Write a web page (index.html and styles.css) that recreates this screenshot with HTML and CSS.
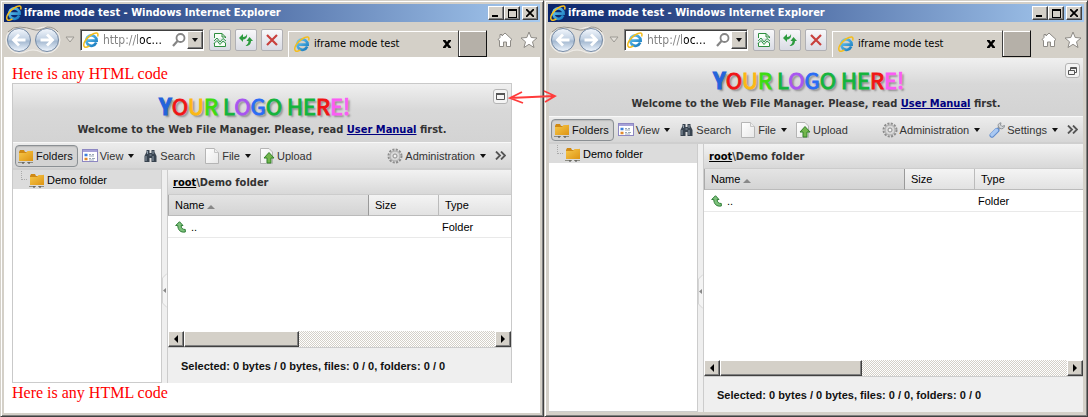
FILE: index.html
```
<!DOCTYPE html>
<html lang="en">
<head>
<meta charset="utf-8">
<title>iframe mode test</title>
<link rel="stylesheet" href="styles.css">
</head>
<body>
<svg class="defs" width="0" height="0" aria-hidden="true">
  <defs>
    <linearGradient id="g-orb" x1="0" y1="0" x2="0" y2="1"><stop offset="0" stop-color="#f4f8fd"/><stop offset=".45" stop-color="#c3d2e4"/><stop offset=".55" stop-color="#a3b8d0"/><stop offset="1" stop-color="#f2f8ff"/></linearGradient>
    <linearGradient id="g-folder" x1="0" y1="0" x2="1" y2="1"><stop offset="0" stop-color="#f7c84b"/><stop offset="1" stop-color="#dd9413"/></linearGradient>
    <linearGradient id="g-ie" x1="0" y1="0" x2="1" y2="1"><stop offset="0" stop-color="#6ccaf5"/><stop offset="1" stop-color="#1579bd"/></linearGradient>
    <linearGradient id="g-page" x1="0" y1="0" x2="1" y2="1"><stop offset="0" stop-color="#ffffff"/><stop offset="1" stop-color="#e8e8e8"/></linearGradient>
    <symbol id="ie" viewBox="0 0 16 16"><path d="M13.2 10.600A5.200 5.200 0 1 1 13.600 8.600H3.900" fill="none" stroke="url(#g-ie)" stroke-width="2.700"/><path d="M1.600 15C-1 12.500 3 6 8 3S16 .4 14.600 4.400M1.600 15C3 15.800 5 14.800 6.400 13.800" fill="none" stroke="#f4bd1d" stroke-width="1.500"/></symbol>
    <symbol id="orbs" viewBox="0 0 56 28"><path d="M14 1C22 1 23 3.500 28 3.500S34 1 42 1A13 13 0 0 1 42 27C35 27 34 24 28 24S21 27 14 27A13 13 0 0 1 14 1Z" fill="#dedbd6" stroke="#f3f1ed"/><path d="M3 6Q8 .5 15 1T28 3.500T42 1Q49 1 53 6" fill="none" stroke="#8f8c86"/><circle cx="14" cy="14" r="11.500" fill="url(#g-orb)" stroke="#7489a4"/><circle cx="42" cy="14" r="11.500" fill="url(#g-orb)" stroke="#7489a4"/><path d="M20.500 14H9M14 8.500L8.500 14L14 19.500M35.500 14H47M42 8.500L47.500 14L42 19.500" fill="none" stroke="#fff" stroke-width="2.800"/></symbol>
    <symbol id="hist" viewBox="0 0 10 7"><path d="M1 1H9L5 6Z" fill="#e3e0da" stroke="#9d9a94"/></symbol>
    <symbol id="lens" viewBox="0 0 14 14"><circle cx="8.500" cy="5" r="4" fill="none" stroke="#858585" stroke-width="1.800"/><path d="M5.500 8L1 13" stroke="#858585" stroke-width="2.200"/></symbol>
    <symbol id="compat" viewBox="0 0 14 14"><path d="M1.500 5V.500H9L12.500 4V5M1.500 10V13.500H12.500V10M9 .500V4H12.500" fill="#f7fff7" stroke="#2e8e3f"/><path d="M1 8L4 5L7 9L10 5.500L13 8M1 10.500L4 7.500L7 11.500L10 8L13 10.500" fill="none" stroke="#2e9a45"/></symbol>
    <symbol id="reload" viewBox="0 0 14 14"><path d="M0 5L4 1V4C6 4 7.500 3 8 1C8.500 4 7 6.500 4 6.500V9ZM14 8L10.500 4L7.500 8H9.500C9.500 10 8.500 11.500 6.500 13C10 13 12 11 12 8Z" fill="#2c9b3e"/></symbol>
    <symbol id="stop" viewBox="0 0 12 12"><path d="M1 1L11 11M11 1L1 11" stroke="#c9403d" stroke-width="2.200"/></symbol>
    <symbol id="close" viewBox="0 0 8 8"><path d="M0 0H2.500L4 2L5.500 0H8V1L5.500 4L8 7V8H5.500L4 6L2.500 8H0V7L2.500 4L0 1Z"/></symbol>
    <symbol id="home" viewBox="0 0 16 16"><path d="M8 1L15 7.500L13.500 8.500V14.500H9.500V10H6.500V14.500H2.500V8.500L1 7.500L3 5.500V2.500H5V4Z" fill="#fff" stroke="#8e8b86"/></symbol>
    <symbol id="star" viewBox="0 0 18 18"><path d="M9 1L11.200 6.500L17 7L12.500 10.800L14 16.500L9 13.300L4 16.500L5.500 10.800L1 7L6.800 6.500Z" fill="#fff" stroke="#8e8b86"/></symbol>
    <symbol id="folder" viewBox="0 0 16 16"><path d="M1 4L2 2H6L7 4H14L15 2.500V13H1Z" fill="#cf8915"/><path d="M1 5H8L9.500 3H15V13H1Z" fill="url(#g-folder)"/><path d="M0 14.500H7M9 14.500H15" stroke="#8d8d83"/><path d="M4 15H6M10 15H12" stroke="#444" stroke-width="1"/></symbol>
    <symbol id="view" viewBox="0 0 16 16"><rect x=".5" y="1.500" width="15" height="12" fill="#fff" stroke="#8d87c2"/><path d="M1 3H15" stroke="#a7a2d8" stroke-width="2"/><path d="M2.500 7H5.500" stroke="#3d7fda" stroke-width="2.500"/><path d="M2.500 11H5.500" stroke="#e08b2c" stroke-width="2.500"/><path d="M7 6.500H9M10 6.500H12M7 8H12M7 10.500H9M10 10.500H13M7 12H12" stroke="#9aa9b8"/></symbol>
    <symbol id="search" viewBox="0 0 14 14"><path d="M3 1H6V4H8V1H11V3L13 7V13H8V9H6V13H1V7L3 3Z" fill="#38434f"/><path d="M2.500 7V12M4 2V5M9.500 2V5M9.500 7V12M6 6H8" stroke="#8f9daa"/></symbol>
    <symbol id="file" viewBox="0 0 14 16"><path d="M.5 .5H9.500L13.500 4.500V15.500H.5Z" fill="url(#g-page)" stroke="#b5b5b5"/><path d="M9.500 .5V4.500H13.500" fill="#eee" stroke="#c5c5c5"/></symbol>
    <symbol id="upload" viewBox="0 0 15 16"><path d="M.5 .5H9L12.500 4V15.500H.5Z" fill="url(#g-page)" stroke="#b5b5b5"/><path d="M9 4.500L14 10H11V15H7V10H4Z" fill="#72b64c" stroke="#33812a"/></symbol>
    <symbol id="gear" viewBox="0 0 16 16"><circle cx="8" cy="8" r="6.500" fill="none" stroke="#8d8d8d" stroke-width="2" stroke-dasharray="2.100 1.300"/><circle cx="8" cy="8" r="5" fill="#d8d8d8" stroke="#a9a9a9"/><circle cx="8" cy="8" r="2" fill="#f2f2f2" stroke="#8f8f8f"/></symbol>
    <symbol id="wrench" viewBox="0 0 16 16"><path d="M8 8L11.500 4.500" stroke="#8f949a" stroke-width="2.500"/><path d="M12 .8C9.500 1 8.500 3 9.500 5L11 6.500C13.500 7.500 15.500 6 15.500 3.500L13 4.500L11.500 3Z" fill="#d2d5d8" stroke="#8d9297"/><path d="M3 13.200L8 8.300" stroke="#5f8bcd" stroke-width="5" stroke-linecap="round"/><path d="M3 12.800L7.500 8.300" stroke="#a9c8f2" stroke-width="3.500" stroke-linecap="round"/></symbol>
    <symbol id="more" viewBox="0 0 11 9"><path d="M1 .5L5 4.500L1 8.500M6 .5L10 4.500L6 8.500" fill="none" stroke="#555" stroke-width="1.800"/></symbol>
    <symbol id="up" viewBox="0 0 11 12"><path d="M4.500 .7L8 4.500H6.200C6 7 7.500 8.500 10.300 8.500V11C5.500 11.800 2.800 9 2.800 4.500H.7Z" fill="#7cc07a" stroke="#2f7d37"/></symbol>
    <symbol id="maxi" viewBox="0 0 9 7"><path d="M.5 1V6.500H8.500V1" fill="none" stroke="#555"/><path d="M0 1H9" stroke="#555" stroke-width="2"/></symbol>
    <symbol id="restore" viewBox="0 0 9 8"><path d="M2.500 3V.500H8.500V5.500H7M.5 3.500H6.500V7.500H.5ZM2.500 1.500H8.500" fill="none" stroke="#555"/></symbol>
  </defs>
</svg>

<main class="desktop">
  <section class="window">
    <header class="titlebar">
      <svg class="i16"><use href="#ie"/></svg>
      <h1 class="title">iframe mode test - Windows Internet Explorer</h1>
      <div class="winbtns">
        <button class="winbtn" aria-label="Minimize"><span class="g-min"></span></button>
        <button class="winbtn" aria-label="Maximize"><span class="g-max"></span></button>
        <button class="winbtn winbtn-close" aria-label="Close"><svg width="8" height="8"><path d="M0 0L8 8M8 0L0 8" stroke="#000" stroke-width="1.800"/></svg></button>
      </div>
    </header>
    <nav class="navbar">
      <button class="plain orbs" aria-label="Back and forward"><svg width="56" height="28"><use href="#orbs"/></svg></button>
      <button class="plain hist" aria-label="Recent pages"><svg width="10" height="7"><use href="#hist"/></svg></button>
      <div class="address">
        <svg class="i16"><use href="#ie"/></svg>
        <input class="url" type="text" aria-label="Address" value="http://loc...">
        <button class="plain" aria-label="Search"><svg width="14" height="14"><use href="#lens"/></svg></button>
        <button class="drop" aria-label="Show list"><span class="caret"></span></button>
      </div>
      <div class="navbtns">
        <button class="navbtn" aria-label="Compatibility view"><svg width="14" height="14"><use href="#compat"/></svg></button>
        <button class="navbtn" aria-label="Refresh"><svg width="14" height="14"><use href="#reload"/></svg></button>
        <button class="navbtn" aria-label="Stop"><svg width="12" height="12"><use href="#stop"/></svg></button>
      </div>
      <div class="tab">
        <svg class="i16"><use href="#ie"/></svg>
        <span class="tabname">iframe mode test</span>
        <button class="plain" aria-label="Close tab"><svg width="8" height="8"><use href="#close"/></svg></button>
      </div>
      <button class="newtab" aria-label="New tab"></button>
      <div class="links">
        <button class="plain" aria-label="Home"><svg width="16" height="16"><use href="#home"/></svg></button>
        <button class="plain" aria-label="Favorites"><svg width="18" height="18"><use href="#star"/></svg></button>
      </div>
    </nav>
    <div class="page page-framed">
      <p class="html">Here is any HTML code</p>
      <article class="manager manager-framed">
        <header class="banner">
          <div class="logo"><span class="ly">Y</span><span class="c1">O</span><span class="c2">U</span><span class="c3">R</span> <span class="c4">L</span><span class="c5">O</span><span class="c6">G</span><span class="c4">O</span> <span class="c4">HE</span><span class="c1">R</span><span class="c7">E!</span></div>
          <p class="welcome">Welcome to the Web File Manager. Please, read <a href="#manual">User Manual</a> first.</p>
          <button class="modebtn" aria-label="Full window"><svg width="9" height="7"><use href="#maxi"/></svg></button>
        </header>
        <div class="toolbar">
          <button class="tool tool-on"><svg class="i16"><use href="#folder"/></svg>Folders</button>
          <button class="tool"><svg class="i16"><use href="#view"/></svg>View<span class="caret"></span></button>
          <button class="tool"><svg width="15" height="14"><use href="#search"/></svg>Search</button>
          <button class="tool"><svg width="16" height="16"><use href="#file"/></svg>File<span class="caret"></span></button>
          <button class="tool"><svg width="15" height="16"><use href="#upload"/></svg>Upload</button>
          <span class="fill"></span>
          <button class="tool"><svg class="i16"><use href="#gear"/></svg>Administration<span class="caret"></span></button>
          <button class="tool" aria-label="More"><svg width="11" height="9"><use href="#more"/></svg></button>
        </div>
        <div class="body">
          <aside class="tree"><div class="node"><span class="twig"></span><svg class="i16"><use href="#folder"/></svg>Demo folder</div></aside>
          <div class="splitter"><button class="grip" aria-label="Collapse"><svg width="5" height="35"><path d="M5 .5L.5 5V30L5 34.500" fill="#f4f4f4" stroke="#d5d5d5"/><path d="M4 15V20L1 17.500Z" fill="#888"/></svg></button></div>
          <section class="files">
            <div class="path"><a href="#root">root</a>\Demo folder</div>
            <div class="list">
              <table class="table">
                <thead><tr><th class="name">Name <span class="sort"></span></th><th class="size">Size</th><th>Type</th></tr></thead>
                <tbody><tr><td><div class="entry"><svg width="11" height="12"><use href="#up"/></svg>..</div></td><td></td><td>Folder</td></tr></tbody>
              </table>
            </div>
            <div class="scroll"><button class="sbtn" aria-label="Scroll left"><span class="left"></span></button><div class="track"><div class="thumb"></div></div><button class="sbtn" aria-label="Scroll right"><span class="right"></span></button></div>
            <footer class="status">Selected: 0 bytes / 0 bytes, files: 0 / 0, folders: 0 / 0</footer>
          </section>
        </div>
      </article>
      <p class="html">Here is any HTML code</p>
    </div>
  </section>

  <section class="window">
    <header class="titlebar">
      <svg class="i16"><use href="#ie"/></svg>
      <h1 class="title">iframe mode test - Windows Internet Explorer</h1>
      <div class="winbtns">
        <button class="winbtn" aria-label="Minimize"><span class="g-min"></span></button>
        <button class="winbtn" aria-label="Maximize"><span class="g-max"></span></button>
        <button class="winbtn winbtn-close" aria-label="Close"><svg width="8" height="8"><path d="M0 0L8 8M8 0L0 8" stroke="#000" stroke-width="1.800"/></svg></button>
      </div>
    </header>
    <nav class="navbar">
      <button class="plain orbs" aria-label="Back and forward"><svg width="56" height="28"><use href="#orbs"/></svg></button>
      <button class="plain hist" aria-label="Recent pages"><svg width="10" height="7"><use href="#hist"/></svg></button>
      <div class="address">
        <svg class="i16"><use href="#ie"/></svg>
        <input class="url" type="text" aria-label="Address" value="http://loc...">
        <button class="plain" aria-label="Search"><svg width="14" height="14"><use href="#lens"/></svg></button>
        <button class="drop" aria-label="Show list"><span class="caret"></span></button>
      </div>
      <div class="navbtns">
        <button class="navbtn" aria-label="Compatibility view"><svg width="14" height="14"><use href="#compat"/></svg></button>
        <button class="navbtn" aria-label="Refresh"><svg width="14" height="14"><use href="#reload"/></svg></button>
        <button class="navbtn" aria-label="Stop"><svg width="12" height="12"><use href="#stop"/></svg></button>
      </div>
      <div class="tab">
        <svg class="i16"><use href="#ie"/></svg>
        <span class="tabname">iframe mode test</span>
        <button class="plain" aria-label="Close tab"><svg width="8" height="8"><use href="#close"/></svg></button>
      </div>
      <button class="newtab" aria-label="New tab"></button>
      <div class="links">
        <button class="plain" aria-label="Home"><svg width="16" height="16"><use href="#home"/></svg></button>
        <button class="plain" aria-label="Favorites"><svg width="18" height="18"><use href="#star"/></svg></button>
      </div>
    </nav>
    <div class="page page-full">
      <article class="manager">
        <header class="banner">
          <div class="logo"><span class="ly">Y</span><span class="c1">O</span><span class="c2">U</span><span class="c3">R</span> <span class="c4">L</span><span class="c5">O</span><span class="c6">G</span><span class="c4">O</span> <span class="c4">HE</span><span class="c1">R</span><span class="c7">E!</span></div>
          <p class="welcome">Welcome to the Web File Manager. Please, read <a href="#manual">User Manual</a> first.</p>
          <button class="modebtn" aria-label="Restore"><svg width="9" height="8"><use href="#restore"/></svg></button>
        </header>
        <div class="toolbar">
          <button class="tool tool-on"><svg class="i16"><use href="#folder"/></svg>Folders</button>
          <button class="tool"><svg class="i16"><use href="#view"/></svg>View<span class="caret"></span></button>
          <button class="tool"><svg width="15" height="14"><use href="#search"/></svg>Search</button>
          <button class="tool"><svg width="16" height="16"><use href="#file"/></svg>File<span class="caret"></span></button>
          <button class="tool"><svg width="15" height="16"><use href="#upload"/></svg>Upload</button>
          <span class="fill"></span>
          <button class="tool"><svg class="i16"><use href="#gear"/></svg>Administration<span class="caret"></span></button>
          <button class="tool"><svg class="i16"><use href="#wrench"/></svg>Settings<span class="caret"></span></button>
          <button class="tool" aria-label="More"><svg width="11" height="9"><use href="#more"/></svg></button>
        </div>
        <div class="body">
          <aside class="tree"><div class="node"><span class="twig"></span><svg class="i16"><use href="#folder"/></svg>Demo folder</div></aside>
          <div class="splitter"><button class="grip" aria-label="Collapse"><svg width="5" height="35"><path d="M5 .5L.5 5V30L5 34.500" fill="#f4f4f4" stroke="#d5d5d5"/><path d="M4 15V20L1 17.500Z" fill="#888"/></svg></button></div>
          <section class="files">
            <div class="path"><a href="#root">root</a>\Demo folder</div>
            <div class="list">
              <table class="table">
                <thead><tr><th class="name">Name <span class="sort"></span></th><th class="size">Size</th><th>Type</th></tr></thead>
                <tbody><tr><td><div class="entry"><svg width="11" height="12"><use href="#up"/></svg>..</div></td><td></td><td>Folder</td></tr></tbody>
              </table>
            </div>
            <div class="scroll"><button class="sbtn" aria-label="Scroll left"><span class="left"></span></button><div class="track"><div class="thumb thumb-wide"></div></div><button class="sbtn" aria-label="Scroll right"><span class="right"></span></button></div>
            <footer class="status">Selected: 0 bytes / 0 bytes, files: 0 / 0, folders: 0 / 0</footer>
          </section>
        </div>
      </article>
    </div>
  </section>
  <svg class="arrow" width="49" height="15" aria-hidden="true"><path d="M2 8L46 6M14 2L2 8L15 13M36 1L47 6L37 12" fill="none" stroke="#ff3b3b" stroke-width="1.800"/></svg>
</main>
</body>
</html>
```
FILE: styles.css
```
* { box-sizing: border-box; }
body { margin: 0; font: 11px/14px "Liberation Sans", Arial, sans-serif; color: #111; background: #d4d0c8; }
button { font: inherit; color: inherit; margin: 0; padding: 0; border: 0; display: flex; align-items: center; justify-content: center; }
svg { display: block; flex: none; }
p, h1 { margin: 0; }
.defs { position: absolute; }
.i16 { width: 16px; height: 16px; }
.fill { flex: 1; }

.desktop { display: flex; min-height: 100vh; position: relative; }
.window {
  flex: 1; min-width: 0; display: flex; flex-direction: column; padding: 3px;
  background: #d4d0c8; border: 1px solid; border-color: #d4d0c8 #404040 #404040 #d4d0c8;
  box-shadow: inset 1px 1px #fff, inset -1px -1px #808080;
}
.arrow { position: absolute; top: 90px; left: calc(50% - 36px); }

/* Title bar */
.titlebar { display: flex; align-items: center; height: 18px; padding: 0 2px; background: linear-gradient(90deg, #0a246a, #a6caf0); }
.title { flex: 1; padding-left: 2px; color: #fff; font: bold 11px/16px "DejaVu Sans Condensed", "DejaVu Sans", sans-serif; white-space: nowrap; }
.winbtns { display: flex; }
.winbtn { width: 16px; height: 14px; background: #d4d0c8; border: 1px solid; border-color: #fff #404040 #404040 #fff; box-shadow: inset -1px -1px #808080; }
.winbtn-close { margin-left: 2px; }
.g-min { width: 6px; height: 2px; background: #000; align-self: flex-end; margin: 0 2px 2px 0; }
.g-max { width: 9px; height: 9px; border: 1px solid #000; border-top-width: 2px; }

/* Navigation bar */
.plain { background: none; }
.navbar { display: flex; align-items: center; height: 35px; padding: 0 4px 0 1px; }
.hist { width: 18px; }
.address { display: flex; align-items: center; width: 124px; height: 22px; padding-left: 2px; margin-left: 1px; background: #fff; border: 1px solid; border-color: #808080 #fff #fff #808080; box-shadow: inset 1px 1px #404040; }
.url {
  flex: 1; min-width: 0; border: 0; padding: 0 0 0 4px; margin: 0; height: 18px; font: 12px/16px "DejaVu Sans Condensed", sans-serif;
  color: transparent; background: linear-gradient(90deg, #808080 41px, #000 41px); -webkit-background-clip: text; background-clip: text;
}
.drop { width: 16px; height: 18px; margin: 1px 0 0 1px; background: #d4d0c8; border: 1px solid; border-color: #fff #404040 #404040 #fff; box-shadow: inset -1px -1px #808080; }
.caret { border: 3px solid transparent; border-top: 4px solid #111; border-bottom: 0; }
.navbtns { display: flex; gap: 4px; padding: 0 5px; }
.navbtn { width: 22px; height: 22px; border: 1px solid #b0b0b4; border-radius: 2px; background: linear-gradient(#f8f8fa, #d9dbe4); }
.tab { display: flex; align-items: center; flex: 1; min-width: 0; align-self: flex-end; height: 26px; padding: 0 7px 1px 5px; border: 1px solid #fff; border-width: 1px 0 0 1px; }
.tabname { flex: 1; min-width: 0; padding-left: 4px; font: 11px/16px "DejaVu Sans Condensed", sans-serif; color: #000; white-space: nowrap; }
.newtab { width: 29px; height: 27px; align-self: flex-end; background: #b5b0a8; border: 1px solid; border-color: #d4d0c8 #111 #111 #404040; box-shadow: inset 1px 1px #fff; }
.links { display: flex; align-items: center; gap: 7px; padding-left: 10px; margin-right: -2px; }

/* Page area */
.page { flex: 1; display: flex; flex-direction: column; background: #fff; }
.page-framed { padding: 7px 28px 10px 8px; }
.page-full { border: 1px solid #d4d0c8; }
.html { color: #f00; font: 16px/19px "Liberation Serif", "Times New Roman", serif; }
.page-framed .html:last-child { line-height: 20px; }

/* File manager */
.manager { flex: 1; display: flex; flex-direction: column; min-width: 0; }
.manager-framed { border: 1px solid #c9c9c9; border-width: 1px 1px 0; }
.banner { position: relative; height: 58px; background: linear-gradient(#f0f0f0, #d8d8d8 45%, #d3d3d3); text-align: center; padding-top: 6px; }
.logo { padding-right: 15px; font: 22px/30px "Noto Sans CJK SC", "Noto Sans", sans-serif; -webkit-text-stroke: 1px; text-shadow: 2px 2px 2px #888; white-space: nowrap; }
.ly { font-weight: bold; color: #2463dc; }
.c1 { color: #f01414; }
.c2 { color: #fdb813; }
.c3 { color: #3ddc10; }
.c4 { color: #14b43c; }
.c5 { color: #a855f0; }
.c6 { color: #2a6cf5; }
.c7 { color: #fb5cf5; }
.welcome { font: bold 11px/20px "DejaVu Sans Condensed", "DejaVu Sans", sans-serif; color: #333; white-space: nowrap; }
.welcome a { color: #000080; }
.modebtn { position: absolute; top: 5px; right: 3px; width: 15px; height: 15px; background: #f4f4f4; border: 1px solid #b4b4b4; border-radius: 3px; }
.toolbar { display: flex; align-items: center; gap: 1px; height: 28px; padding: 0 0 0 2px; background: linear-gradient(#ececec, #d6d6d6); border-top: 1px solid #f8f8f8; border-bottom: 2px solid #cfcfcf; color: #333; }
.tool { height: 22px; gap: 2px; padding: 0 4px 0 2px; background: none; border: 1px solid transparent; white-space: nowrap; }
.tool .caret { margin-left: 3px; }
.tool-on { border-color: #8b9094; border-radius: 4px; background: #d3d3d3; box-shadow: inset 0 1px 1px #bbb; color: #111; }
.body { flex: 1; display: flex; min-height: 0; }
.tree { width: 149px; background: #fff; border-right: 1px solid #ccc; border-bottom: 1px solid #ccc; }
.node { display: flex; align-items: center; gap: 2px; height: 19px; padding: 1px 0 0 8px; background: #dcdcdc; color: #000; }
.twig { align-self: flex-start; width: 6px; height: 9px; border: 1px dotted #aaa; border-width: 0 0 1px 1px; }
.splitter { display: flex; align-items: center; width: 5px; background: #efefef; }
.grip { background: none; margin-top: 27px; }
.files { flex: 1; min-width: 0; display: flex; flex-direction: column; background: #efefef; border-left: 1px solid #ccc; }
.path { height: 24px; padding: 0 5px; font: bold 11px/26px "DejaVu Sans Condensed", "DejaVu Sans", sans-serif; color: #333; background: linear-gradient(#f2f2f2, #d8d8d8); }
.path a { color: #000; }
.list { flex: 1; background: #fff; border-top: 1px solid #ccc; }
.table { width: 100%; table-layout: fixed; border-collapse: separate; border-spacing: 0; color: #000; }
.table th { height: 21px; padding: 0 6px; text-align: left; font-weight: normal; background: linear-gradient(#f4f4f4, #e2e2e2); border-bottom: 1px solid #bbb; }
.table .name { width: 201px; background: linear-gradient(#e4e4e4, #d4d4d4); border-left: 1px solid #aaa; border-right: 1px solid #999; }
.table .size { width: 70px; border-right: 1px solid #bbb; }
.table td { height: 22px; padding: 0 3px; border-bottom: 1px solid #e9e9e9; }
.sort { display: inline-block; border: 4px solid transparent; border-top: 0; border-bottom: 4px solid #888; }
.entry { display: flex; align-items: center; gap: 5px; padding-left: 4px; }
.scroll { display: flex; height: 17px; background: #fff; border-bottom: 1px solid #ccc; }
.sbtn, .thumb { background: #d4d0c8; border: 1px solid; border-color: #fff #404040 #404040 #fff; box-shadow: inset -1px -1px #808080; }
.sbtn { width: 16px; height: 16px; }
.left { border: 4px solid transparent; border-right: 4px solid #000; border-left: 0; }
.right { border: 4px solid transparent; border-left: 4px solid #000; border-right: 0; }
.track { flex: 1; height: 16px; background: conic-gradient(#d4d0c8 25%, #fff 0 50%, #d4d0c8 0 75%, #fff 0) 0 0 / 2px 2px; }
.thumb { width: 37%; height: 16px; }
.thumb-wide { width: 41%; }
.status { height: 35px; padding-left: 13px; font-weight: bold; line-height: 36px; color: #111; white-space: nowrap; }
```
